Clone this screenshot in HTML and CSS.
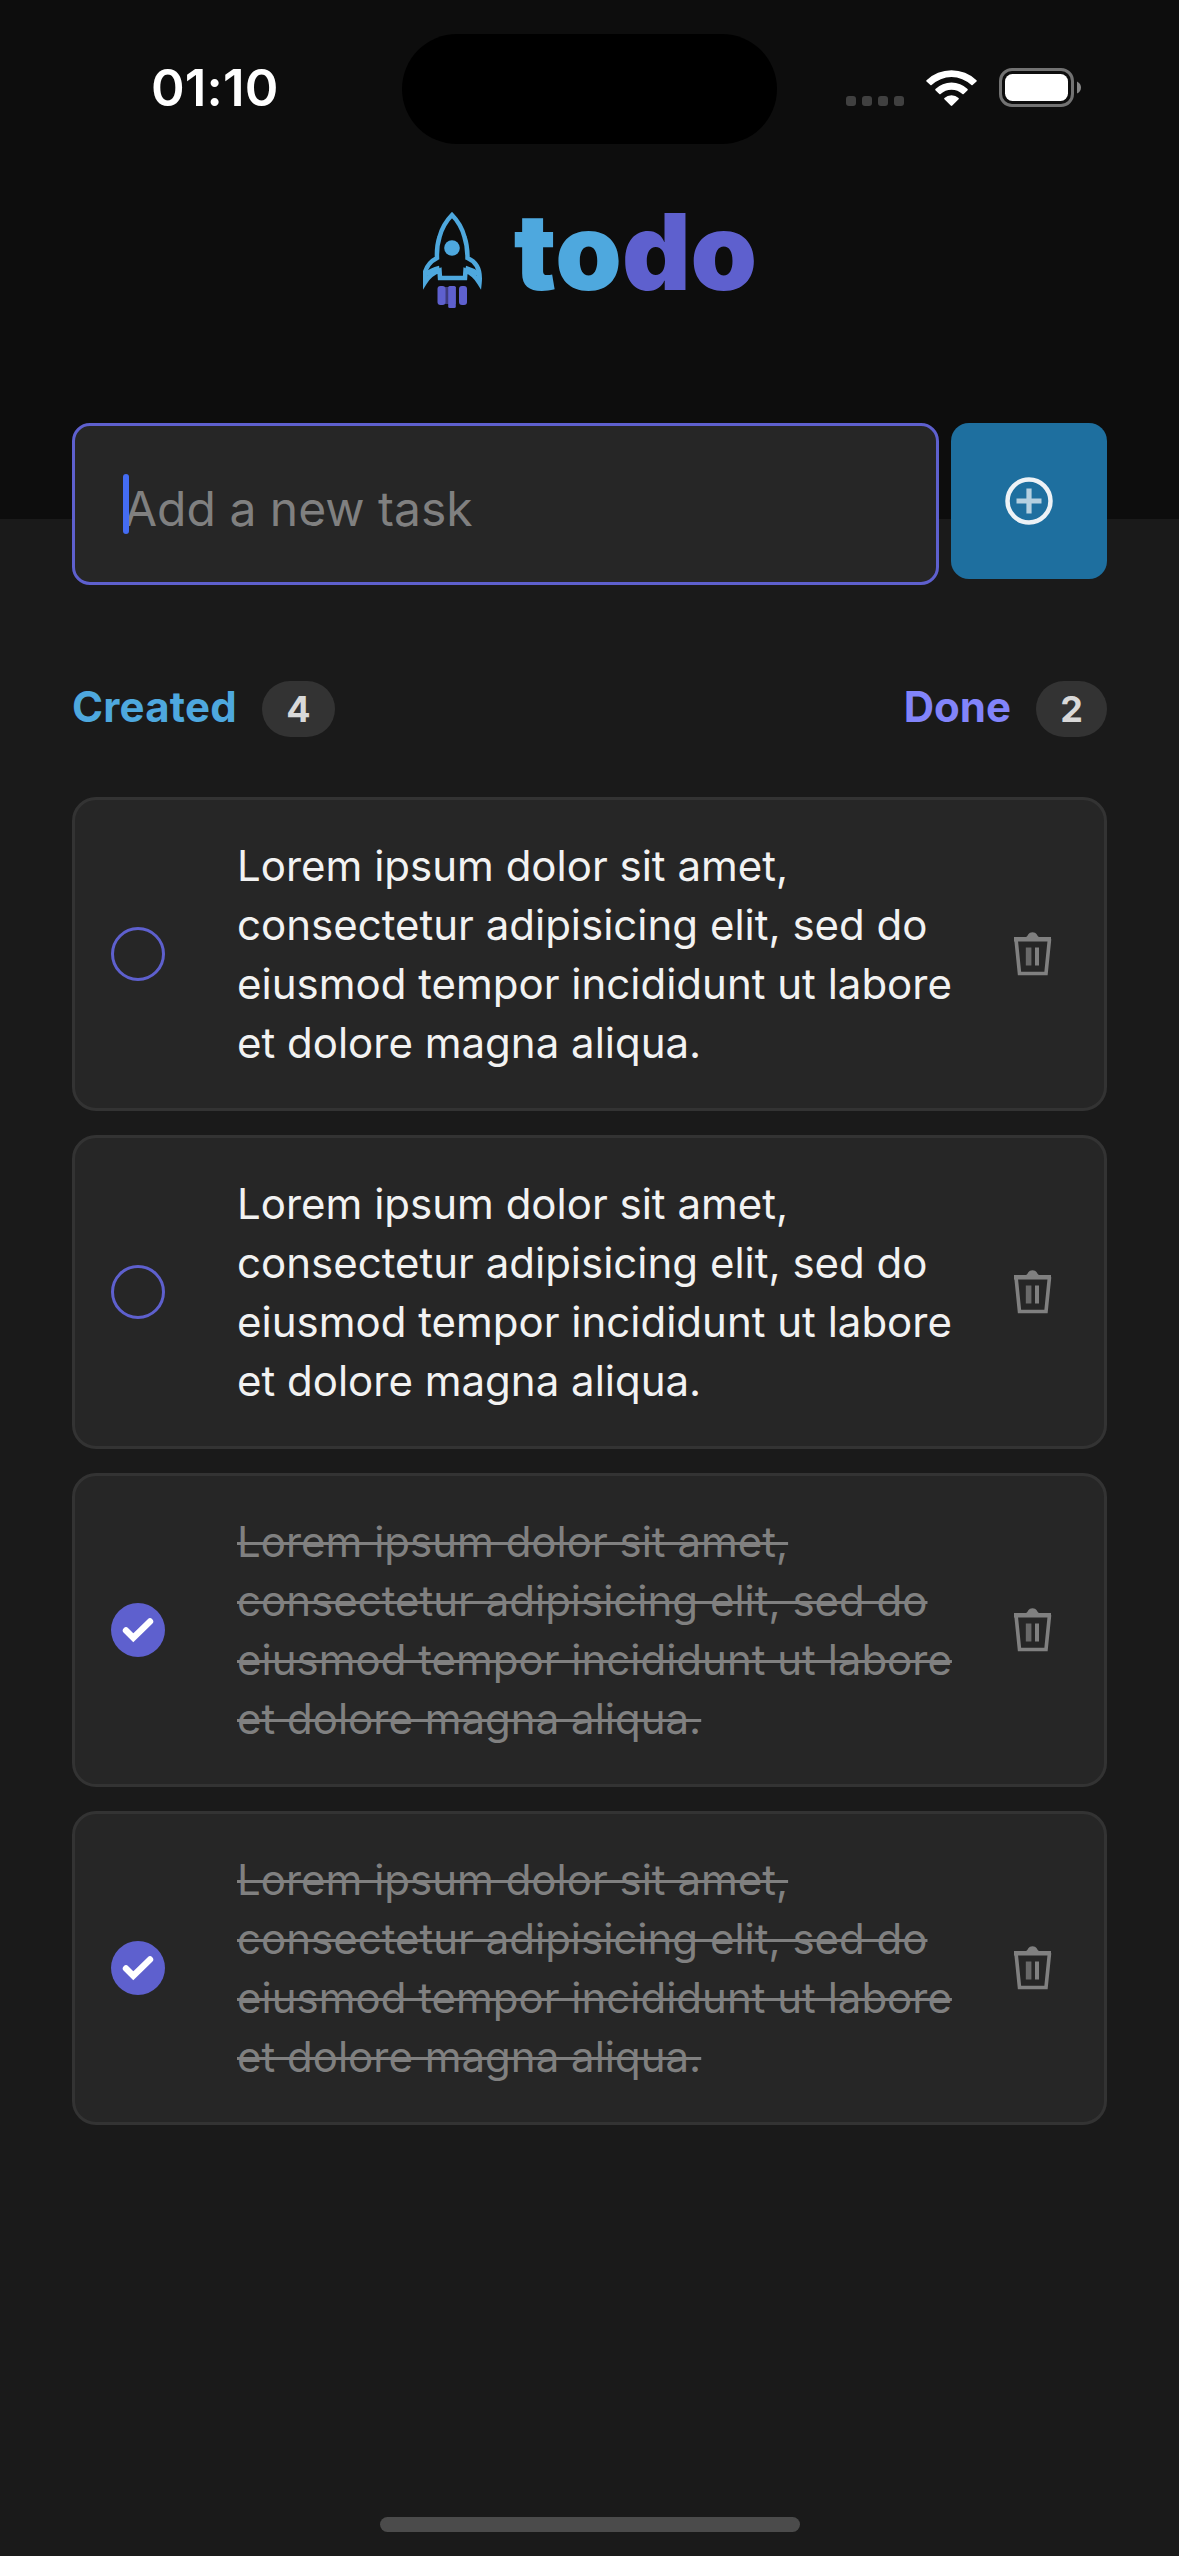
FILE: index.html
```html
<!DOCTYPE html>
<html lang="en">
<head>
<meta charset="utf-8">
<title>todo</title>
<link rel="stylesheet" href="styles.css">
</head>
<body>
<svg class="sprite" aria-hidden="true">
  <symbol id="trash" viewBox="0 0 42 48">
    <path d="M5 9 L8.500 43.500 H35 L38.500 9" fill="none" stroke="currentColor" stroke-width="3.600"/>
    <path d="M3 9.200 H40" stroke="currentColor" stroke-width="4.600"/>
    <path d="M14 8 Q16.500 6.500 17.500 4 Q18.500 2.300 21.500 2.300 Q24.500 2.300 25.500 4 Q26.500 6.500 29 8Z" fill="currentColor"/>
    <path d="M17.600 17.500 V35.500" stroke="currentColor" stroke-width="5.600" opacity=".75"/>
    <path d="M26 17.500 V35.500" stroke="currentColor" stroke-width="4"/>
  </symbol>
  <symbol id="check" viewBox="0 0 54 54">
    <path d="M15 27.500 L22.300 34.700 L39 18.500" fill="none" stroke="#fff" stroke-width="6.400" stroke-linecap="round"/>
  </symbol>
</svg>
<div class="screen">
  <header class="header">
    <div class="status">
      <span class="time">01:10</span>
      <span class="island"></span>
      <div class="indicators">
        <div class="dots"><i></i><i></i><i></i><i></i></div>
        <svg class="wifi" width="52" height="38" viewBox="0 0 52 38">
          <path d="M0.500 11.300 A36 36 0 0 1 50.500 11.300 Q51 12 50.500 12.500 L46.600 16 Q46 16.500 45.400 16 A29 29 0 0 0 5.600 16 Q5 16.500 4.400 16 L0.500 12.500 Q0 12 0.500 11.300Z"/>
          <path d="M9.400 20 A23.500 23.500 0 0 1 41.600 20 Q42 20.600 41.600 21.200 L37.700 25 Q37 25.500 36.400 25 A16 16 0 0 0 14.600 25 Q14 25.500 13.300 25 L9.400 21.200 Q9 20.600 9.400 20Z"/>
          <path d="M18.400 29 A10.500 10.500 0 0 1 32.600 29 Q33.200 29.600 32.600 30.300 L26.300 36.600 Q25.500 37.400 24.700 36.600 L18.400 30.300 Q17.800 29.600 18.400 29Z"/>
        </svg>
        <svg class="battery" width="82" height="39" viewBox="0 0 82 39">
          <rect x="1.500" y="1.500" width="72" height="36" rx="11.500" fill="none" stroke="#727272" stroke-width="3"/>
          <rect x="6" y="6" width="63" height="27" rx="7.500" fill="#fff"/>
          <path d="M78 13.500 Q82 15.500 82 19.500 T78 25.500Z" fill="#868686"/>
        </svg>
      </div>
    </div>
    <div class="logo">
      <svg class="rocket" width="60" height="96" viewBox="0 0 60 96">
        <g fill="none" stroke="#4ea8de" stroke-width="4.500">
          <path d="M29 3 Q20 12 16.500 25 Q13.500 34 14 46 Q4 51 1.500 62 V71 Q7 62 16.500 58.500 L17 66 H42 L42.500 58.500 Q51 62 56.500 71 Q58.500 52 44.500 46 Q44.500 34 41.500 25 Q38 12 29 3Z"/>
          <path d="M2 63 Q8 58 16.500 56 M42.500 56 Q50 58 56.500 63"/>
        </g>
        <circle cx="29" cy="36" r="7.800" fill="#4ea8de"/>
        <rect x="22" y="75" width="14" height="17" fill="#3d3b7c"/>
        <rect x="14.500" y="74" width="8" height="19" rx="3" fill="#5e60ce"/>
        <rect x="25.200" y="74" width="7.600" height="22" rx="1.500" fill="#5e60ce"/>
        <rect x="33" y="74" width="3" height="20" fill="#0d0d0d"/>
        <rect x="36" y="74" width="8" height="19" rx="3" fill="#5e60ce"/>
      </svg>
      <h1 class="wordmark"><span class="to">to</span><span class="do">do</span></h1>
    </div>
  </header>
  <main class="content">
    <div class="form">
      <div class="field"><span class="caret"></span><span class="placeholder">Add a new task</span></div>
      <div class="add" role="button" aria-label="Add">
        <svg width="48" height="48" viewBox="0 0 48 48">
          <circle cx="24" cy="24" r="21.500" fill="none" stroke="#edf2f6" stroke-width="4.500"/>
          <path d="M11.500 24 H36.500 M24 11.500 V36.500" stroke="#b5d0e0" stroke-width="5.200"/>
        </svg>
      </div>
    </div>
    <div class="counters">
      <div class="counter"><span class="created">Created</span><span class="pill pill-created">4</span></div>
      <div class="counter"><span class="done">Done</span><span class="pill pill-done">2</span></div>
    </div>
    <div class="tasks">
      <div class="task">
        <span class="mark"></span>
        <p>Lorem ipsum dolor sit amet,<br>consectetur adipisicing elit, sed do<br>eiusmod tempor incididunt ut labore<br>et dolore magna aliqua.</p>
        <svg class="trash"><use href="#trash"/></svg>
      </div>
      <div class="task">
        <span class="mark"></span>
        <p>Lorem ipsum dolor sit amet,<br>consectetur adipisicing elit, sed do<br>eiusmod tempor incididunt ut labore<br>et dolore magna aliqua.</p>
        <svg class="trash"><use href="#trash"/></svg>
      </div>
      <div class="task completed">
        <span class="mark"><svg class="check"><use href="#check"/></svg></span>
        <p>Lorem ipsum dolor sit amet,<br>consectetur adipisicing elit, sed do<br>eiusmod tempor incididunt ut labore<br>et dolore magna aliqua.</p>
        <svg class="trash"><use href="#trash"/></svg>
      </div>
      <div class="task completed">
        <span class="mark"><svg class="check"><use href="#check"/></svg></span>
        <p>Lorem ipsum dolor sit amet,<br>consectetur adipisicing elit, sed do<br>eiusmod tempor incididunt ut labore<br>et dolore magna aliqua.</p>
        <svg class="trash"><use href="#trash"/></svg>
      </div>
    </div>
  </main>
  <div class="home"></div>
</div>
</body>
</html>
```
FILE: styles.css
```css
* { box-sizing: border-box; }
body { margin: 0; background: #1a1a1a; font-family: Inter, "Liberation Sans", sans-serif; }
svg { display: block; flex: none; }
.sprite { display: none; }
.screen { width: 1179px; height: 2556px; display: flex; flex-direction: column; }

.header { height: 519px; flex: none; background: #0d0d0d; display: flex; flex-direction: column; gap: 68px; }
.status { height: 144px; padding-top: 34px; display: grid; grid-template-columns: 402px 375px 402px; align-items: start; }
.time { margin-top: 23px; padding-left: 151px; color: #fff; font-size: 51px; font-weight: 600; line-height: 62px; letter-spacing: 0.2px; }
.island { height: 110px; border-radius: 55px; background: #000; }
.indicators { padding: 34px 0 0 69px; display: flex; align-items: flex-start; }
.dots { display: flex; gap: 6px; padding-top: 28px; }
.dots i { width: 10px; height: 10px; border-radius: 3px; background: #404040; }
.wifi { margin: 1px 0 0 22px; fill: #fff; }
.battery { margin-left: 21px; }

.logo { display: flex; justify-content: center; align-items: flex-start; height: 96px; padding-left: 1px; gap: 31px; }
.wordmark { margin: 0; font-size: 106.5px; line-height: 79px; font-weight: 900; }
.to { color: #4ea8de; }
.do { color: #5e60ce; }

.content { padding: 0 72px; margin-top: -96px; flex: 1; }
.form { display: flex; align-items: flex-start; gap: 12px; }
.field { flex: 1; height: 162px; padding-left: 48px; display: flex; align-items: center; background: #262626; border: 3px solid #5e60ce; border-radius: 18px; }
.caret { width: 6px; height: 60px; margin-right: -5px; border-radius: 3px; background: #446cf2; position: relative; z-index: 1; }
.placeholder { padding-top: 10px; font-size: 48px; line-height: 58px; color: #808080; }
.add { width: 156px; height: 156px; border-radius: 18px; background: #1e6f9f; display: flex; align-items: center; justify-content: center; }

.counters { margin-top: 96px; height: 56px; display: flex; justify-content: space-between; font-weight: 700; }
.counter { display: flex; align-items: flex-start; gap: 24px; font-size: 42px; line-height: 52px; }
.created { color: #4ea8de; letter-spacing: 0.2px; padding-right: 1px; }
.done { color: #8284fa; padding-right: 1px; }
.pill { height: 56px; border-radius: 28px; background: #333; color: #d9d9d9; font-size: 36px; line-height: 56px; text-align: center; }
.pill-created { width: 73px; }
.pill-done { width: 71px; }

.tasks { margin-top: 60px; display: flex; flex-direction: column; gap: 24px; }
.task { height: 314px; padding: 0 51px 0 36px; display: flex; align-items: center; background: #262626; border: 3px solid #333; border-radius: 24px; color: #f2f2f2; }
.mark { width: 54px; height: 54px; flex: none; border: 3px solid #5e60ce; border-radius: 50%; }
.task p { flex: 1; margin: 0 0 0 72px; font-size: 42px; line-height: 59px; white-space: nowrap; }
.trash { width: 42px; height: 48px; color: #808080; }
.completed p { color: #808080; text-decoration: line-through; text-decoration-thickness: 3px; }
.completed .mark { border: 0; background: #5e60ce; }
.check { width: 54px; height: 54px; }

.home { flex: none; align-self: center; width: 420px; height: 15px; margin-bottom: 24px; border-radius: 8px; background: #4b4b4b; }
```
